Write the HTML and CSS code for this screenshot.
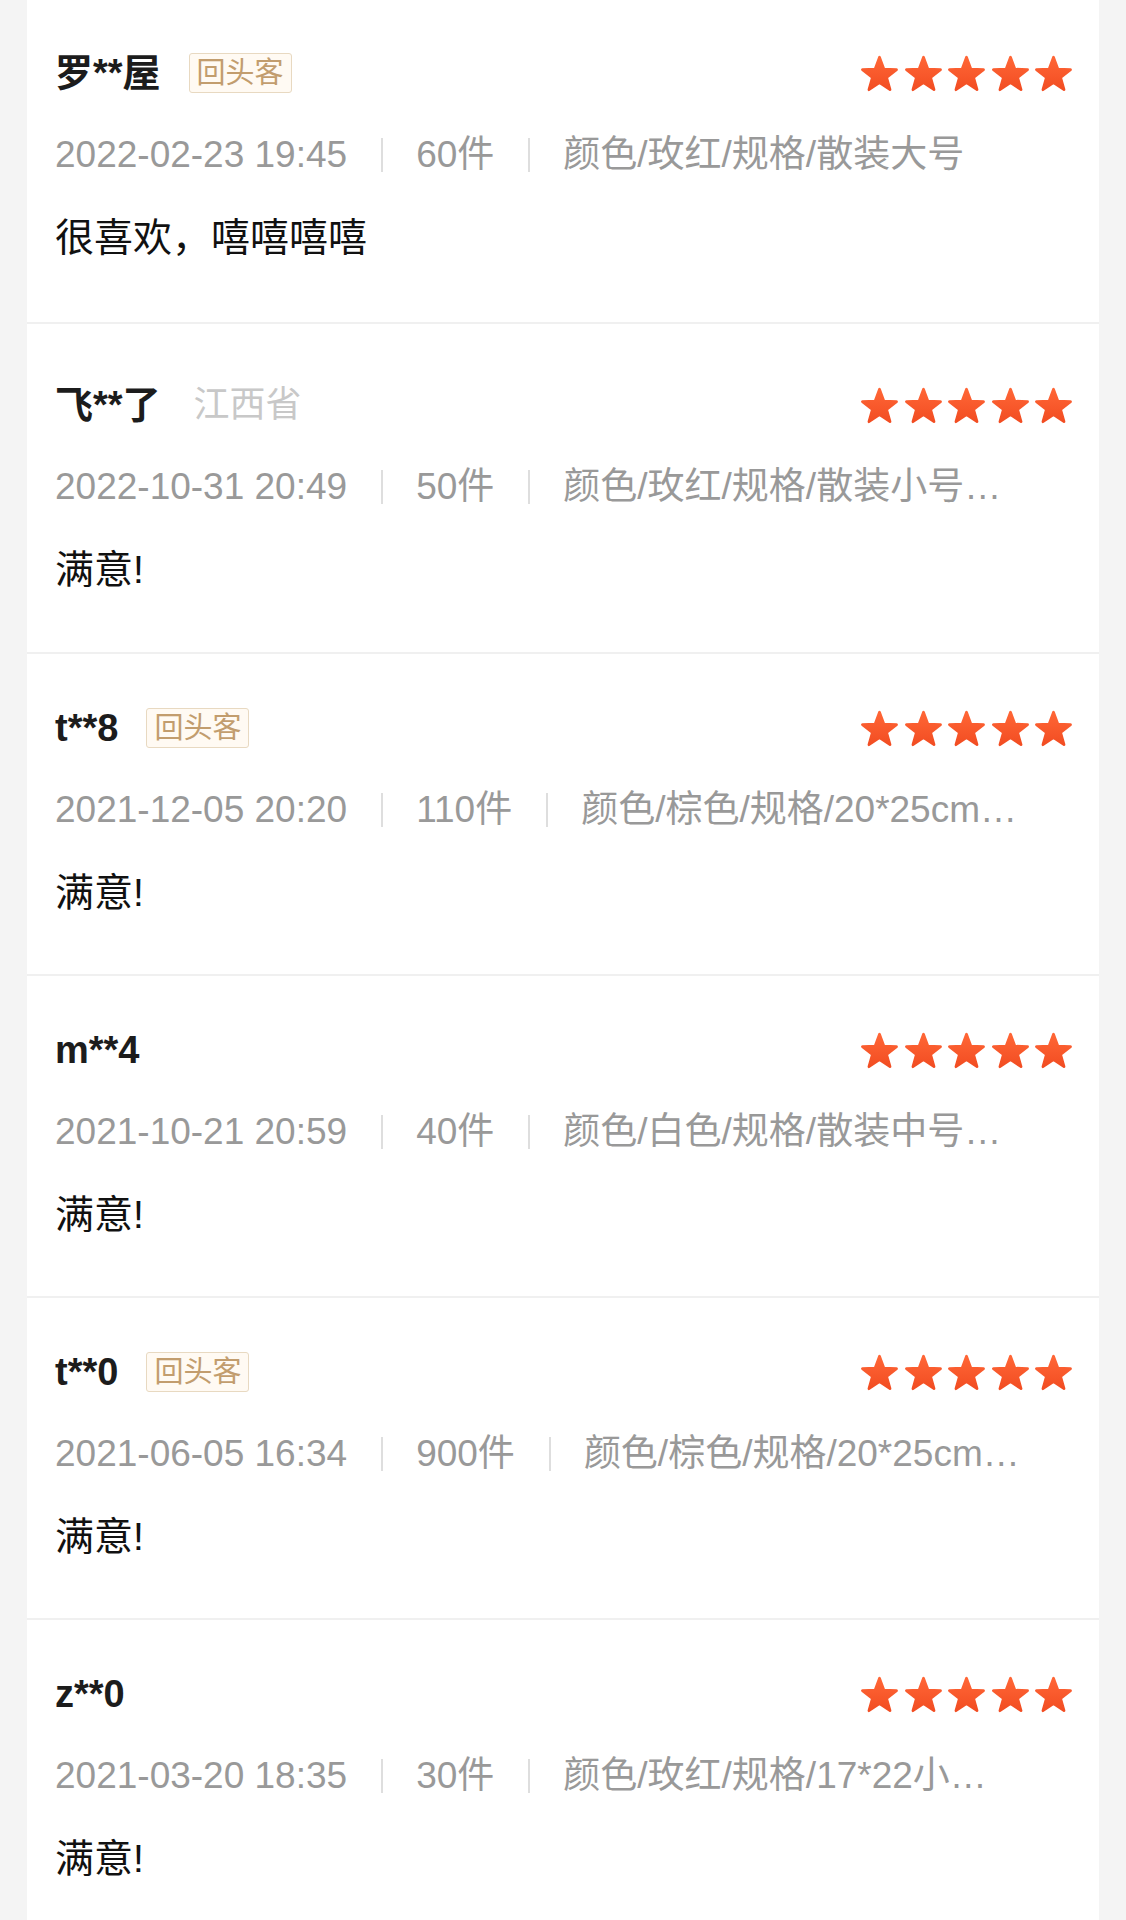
FILE: index.html
```html
<!DOCTYPE html>
<html lang="zh-CN">
<head>
<meta charset="utf-8">
<title>评价</title>
<link rel="stylesheet" href="styles.css">
</head>
<body>
<svg class="defs" width="0" height="0" aria-hidden="true">
  <defs>
    <linearGradient id="starFill" x1="0" y1="0" x2="0" y2="1">
      <stop offset="0" stop-color="#ff6636"/>
      <stop offset="1" stop-color="#f24d22"/>
    </linearGradient>
    <symbol id="star" viewBox="0 0 24 24">
      <path d="M12 2.5L14.59 9.44L21.99 9.76L16.18 14.36L18.17 21.49L12 17.4L5.83 21.49L7.82 14.36L2.01 9.76L9.41 9.44Z" fill="url(#starFill)" stroke="url(#starFill)" stroke-width="1.6" stroke-linejoin="round"/>
    </symbol>
  </defs>
</svg>

<main class="reviews">

  <section class="review review--first">
    <div class="review-head">
      <span class="name">罗**屋</span>
      <span class="badge">回头客</span>
      <div class="stars">
        <svg class="star"><use href="#star"/></svg><svg class="star"><use href="#star"/></svg><svg class="star"><use href="#star"/></svg><svg class="star"><use href="#star"/></svg><svg class="star"><use href="#star"/></svg>
      </div>
    </div>
    <div class="meta">
      <span>2022-02-23 19:45</span><span class="divider"></span><span>60件</span><span class="divider"></span><span class="spec">颜色/玫红/规格/散装大号</span>
    </div>
    <p class="comment">很喜欢，嘻嘻嘻嘻</p>
  </section>

  <section class="review review--located">
    <div class="review-head">
      <span class="name">飞**了</span>
      <span class="location">江西省</span>
      <div class="stars">
        <svg class="star"><use href="#star"/></svg><svg class="star"><use href="#star"/></svg><svg class="star"><use href="#star"/></svg><svg class="star"><use href="#star"/></svg><svg class="star"><use href="#star"/></svg>
      </div>
    </div>
    <div class="meta">
      <span>2022-10-31 20:49</span><span class="divider"></span><span>50件</span><span class="divider"></span><span class="spec">颜色/玫红/规格/散装小号…</span>
    </div>
    <p class="comment">满意!</p>
  </section>

  <section class="review">
    <div class="review-head">
      <span class="name">t**8</span>
      <span class="badge">回头客</span>
      <div class="stars">
        <svg class="star"><use href="#star"/></svg><svg class="star"><use href="#star"/></svg><svg class="star"><use href="#star"/></svg><svg class="star"><use href="#star"/></svg><svg class="star"><use href="#star"/></svg>
      </div>
    </div>
    <div class="meta">
      <span>2021-12-05 20:20</span><span class="divider"></span><span>110件</span><span class="divider"></span><span class="spec">颜色/棕色/规格/20*25cm…</span>
    </div>
    <p class="comment">满意!</p>
  </section>

  <section class="review">
    <div class="review-head">
      <span class="name">m**4</span>
      <div class="stars">
        <svg class="star"><use href="#star"/></svg><svg class="star"><use href="#star"/></svg><svg class="star"><use href="#star"/></svg><svg class="star"><use href="#star"/></svg><svg class="star"><use href="#star"/></svg>
      </div>
    </div>
    <div class="meta">
      <span>2021-10-21 20:59</span><span class="divider"></span><span>40件</span><span class="divider"></span><span class="spec">颜色/白色/规格/散装中号…</span>
    </div>
    <p class="comment">满意!</p>
  </section>

  <section class="review">
    <div class="review-head">
      <span class="name">t**0</span>
      <span class="badge">回头客</span>
      <div class="stars">
        <svg class="star"><use href="#star"/></svg><svg class="star"><use href="#star"/></svg><svg class="star"><use href="#star"/></svg><svg class="star"><use href="#star"/></svg><svg class="star"><use href="#star"/></svg>
      </div>
    </div>
    <div class="meta">
      <span>2021-06-05 16:34</span><span class="divider"></span><span>900件</span><span class="divider"></span><span class="spec">颜色/棕色/规格/20*25cm…</span>
    </div>
    <p class="comment">满意!</p>
  </section>

  <section class="review">
    <div class="review-head">
      <span class="name">z**0</span>
      <div class="stars">
        <svg class="star"><use href="#star"/></svg><svg class="star"><use href="#star"/></svg><svg class="star"><use href="#star"/></svg><svg class="star"><use href="#star"/></svg><svg class="star"><use href="#star"/></svg>
      </div>
    </div>
    <div class="meta">
      <span>2021-03-20 18:35</span><span class="divider"></span><span>30件</span><span class="divider"></span><span class="spec">颜色/玫红/规格/17*22小…</span>
    </div>
    <p class="comment">满意!</p>
  </section>

</main>
</body>
</html>
```

FILE: styles.css
```css
* {
  box-sizing: border-box;
}

html,
body {
  margin: 0;
  padding: 0;
}

body {
  background: #f4f4f4;
  font-family: "Liberation Sans", "Noto Sans CJK SC", sans-serif;
}

.defs {
  display: block;
}

.reviews {
  margin: 0 27px;
  background: #ffffff;
}

.review {
  padding: 52px 25px 58px 28px;
  border-bottom: 2px solid #f0f0f0;
}

.review--first {
  padding-top: 51px;
  padding-bottom: 61px;
}

.review--located {
  padding-top: 59px;
  padding-bottom: 59px;
}

.review-head {
  display: flex;
  align-items: center;
  height: 44px;
}

.name {
  font-size: 38px;
  line-height: 44px;
  font-weight: 700;
  color: #1c1c1c;
}

.badge {
  margin-left: 28px;
  height: 40px;
  padding: 0 7px;
  border: 1px solid #e8d9c1;
  border-radius: 3px;
  background: #fffaf3;
  color: #c29d6e;
  font-size: 29px;
  line-height: 38px;
}

.location {
  margin-left: 33px;
  font-size: 36px;
  line-height: 44px;
  color: #c8c8c8;
}

.stars {
  margin-left: auto;
  display: flex;
  gap: 2.5px;
}

.star {
  display: block;
  width: 41px;
  height: 41px;
}

.meta {
  margin-top: 38px;
  display: flex;
  align-items: center;
  height: 44px;
  font-size: 37px;
  line-height: 44px;
  color: #999999;
  white-space: nowrap;
}

.divider {
  flex: none;
  width: 2px;
  height: 34px;
  margin: 0 33px 0 34px;
  background: #dedede;
}

.spec {
  overflow: hidden;
  text-overflow: ellipsis;
}

.comment {
  margin: 38px 0 0;
  font-size: 39px;
  line-height: 46px;
  color: #111111;
}
```
